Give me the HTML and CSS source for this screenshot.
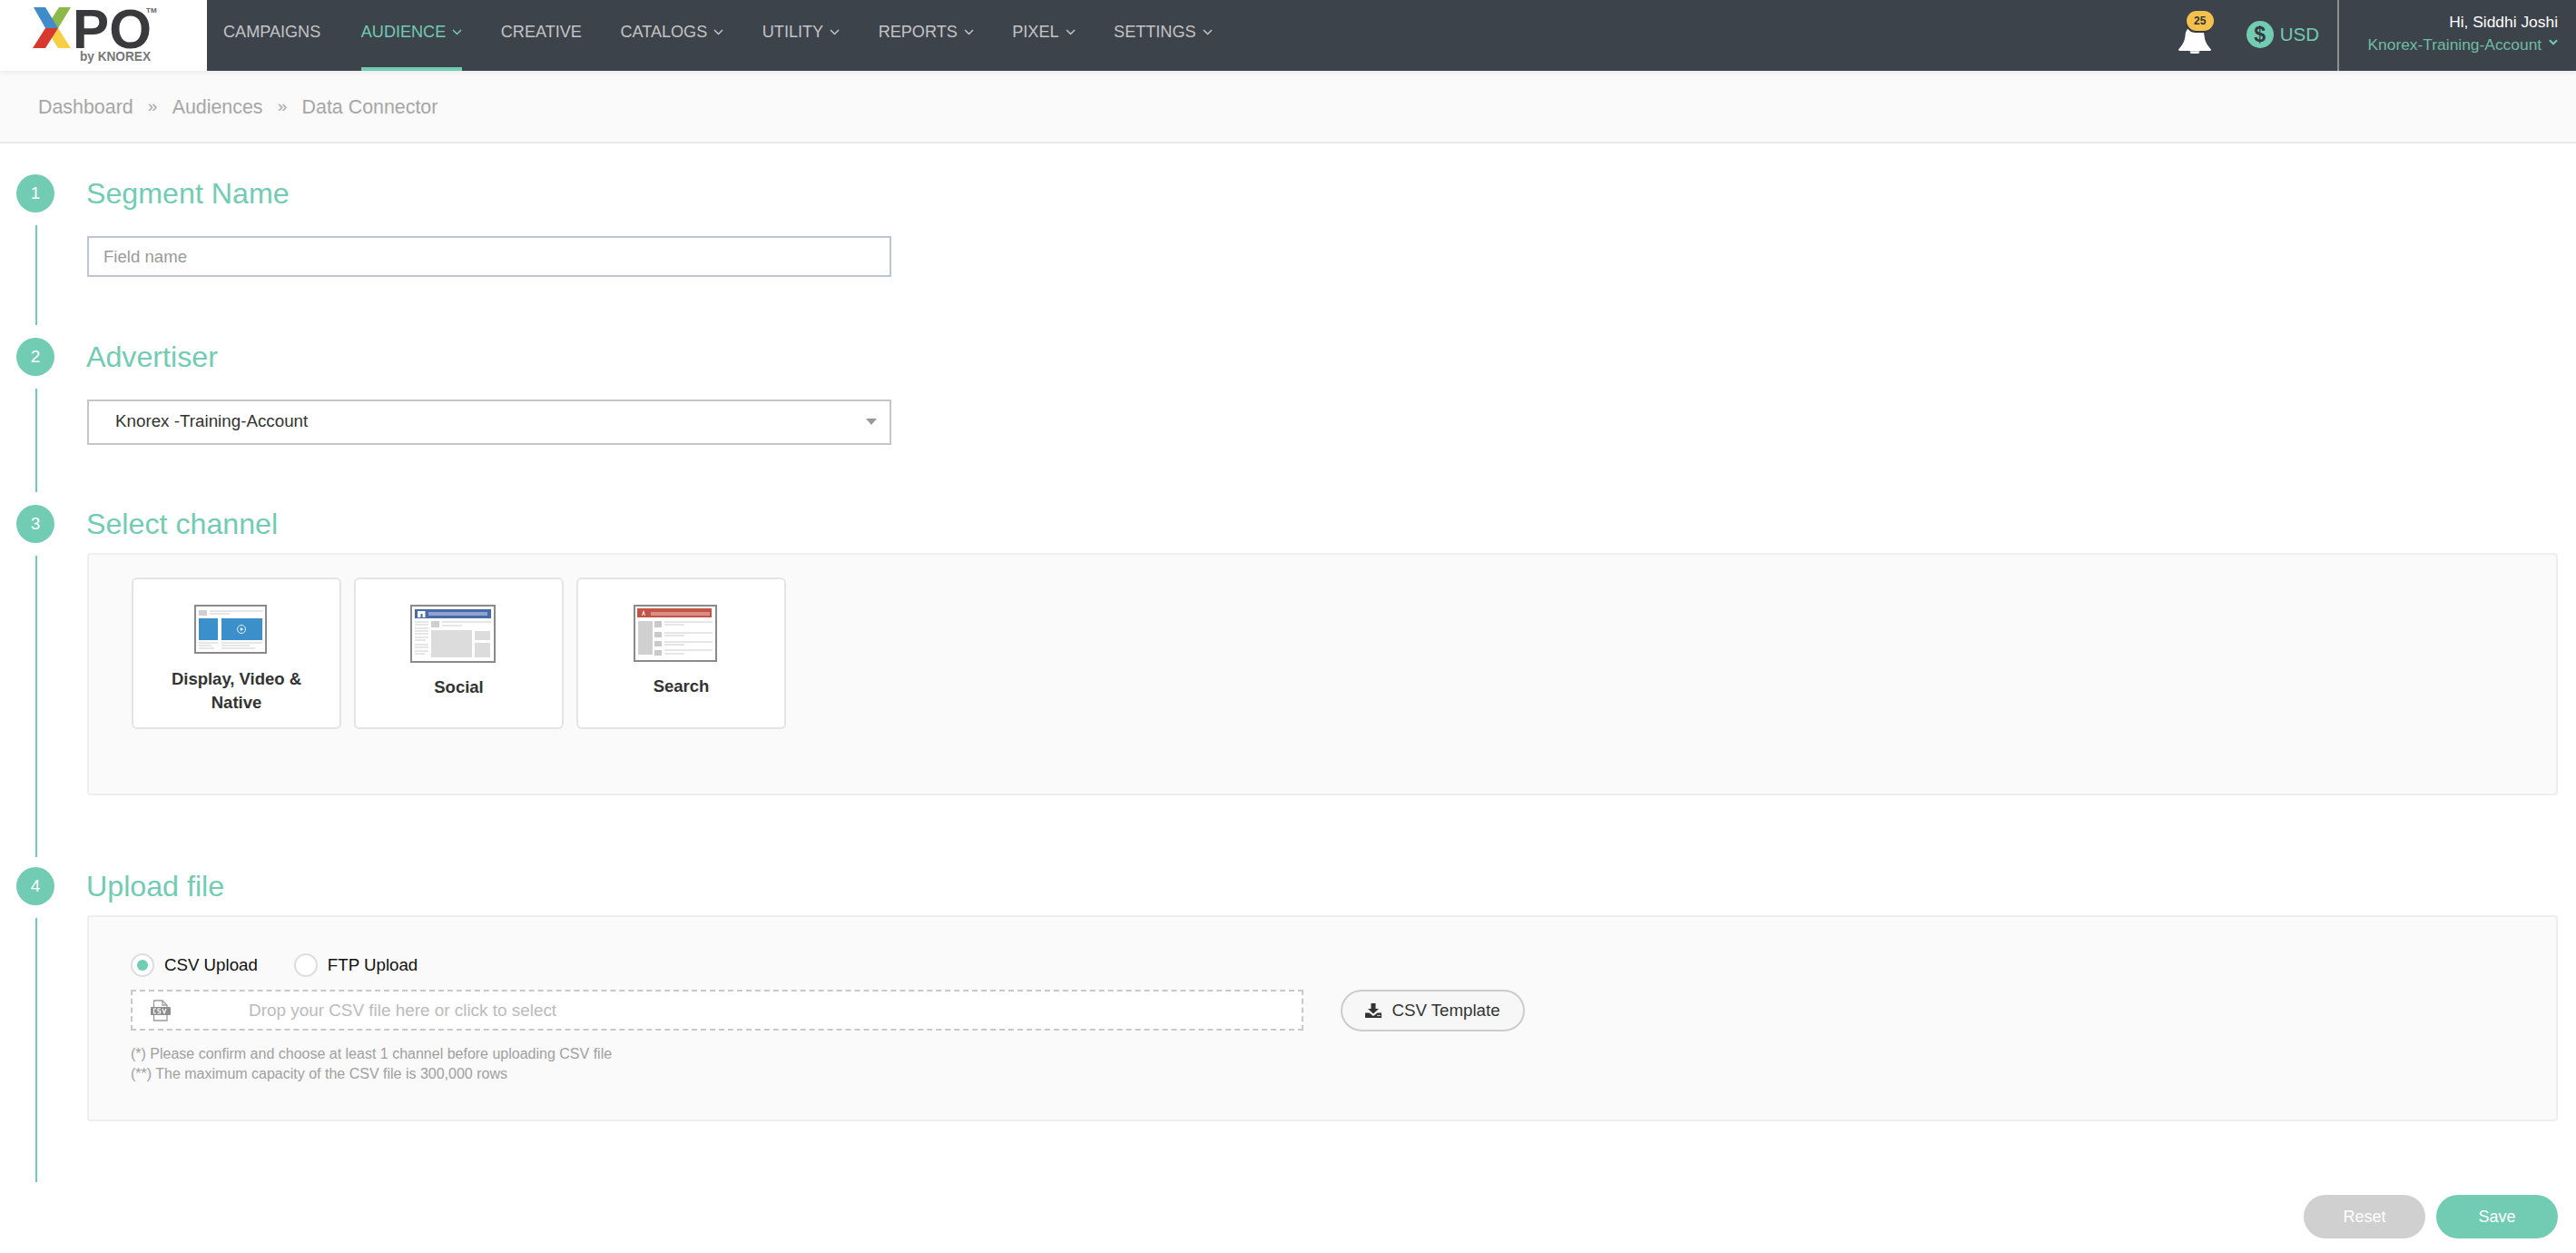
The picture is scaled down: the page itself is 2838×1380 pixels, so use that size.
FILE: index.html
```html
<!DOCTYPE html>
<html lang="en">
<head>
<meta charset="utf-8">
<title>Data Connector</title>
<link rel="stylesheet" href="styles.css">
</head>
<body>
<header class="topbar">
  <a class="logo">
    <svg width="228" height="78" viewBox="0 0 228 78">
      <polygon points="78,8 65,8 50,31 64,31" fill="#8db84a"/>
      <polygon points="37,8 50,8 64,31 50,31" fill="#3f8cc9"/>
      <polygon points="50,31 64,31 78,53 64,53" fill="#f6cf45"/>
      <polygon points="50,31 64,31 50,53 36,53" fill="#d8392f"/>
      <text x="80" y="53" class="logo-po" textLength="87" lengthAdjust="spacingAndGlyphs">PO</text>
      <text x="161" y="14" class="logo-tm">TM</text>
      <text x="88" y="67" class="logo-by" textLength="78" lengthAdjust="spacingAndGlyphs">by KNOREX</text>
    </svg>
  </a>
  <nav class="nav">
    <a class="nav-item">CAMPAIGNS</a>
    <a class="nav-item active">AUDIENCE <svg class="chev" viewBox="0 0 11 7"><polyline points="1,1 5.5,5.5 10,1"/></svg></a>
    <a class="nav-item">CREATIVE</a>
    <a class="nav-item">CATALOGS <svg class="chev" viewBox="0 0 11 7"><polyline points="1,1 5.5,5.5 10,1"/></svg></a>
    <a class="nav-item">UTILITY <svg class="chev" viewBox="0 0 11 7"><polyline points="1,1 5.5,5.5 10,1"/></svg></a>
    <a class="nav-item">REPORTS <svg class="chev" viewBox="0 0 11 7"><polyline points="1,1 5.5,5.5 10,1"/></svg></a>
    <a class="nav-item">PIXEL <svg class="chev" viewBox="0 0 11 7"><polyline points="1,1 5.5,5.5 10,1"/></svg></a>
    <a class="nav-item">SETTINGS <svg class="chev" viewBox="0 0 11 7"><polyline points="1,1 5.5,5.5 10,1"/></svg></a>
  </nav>
  <div class="top-right">
    <div class="bell">
      <svg width="36" height="30" viewBox="0 0 36 30"><path d="M18 0C10 0 8 5 7.500 10C7 16 5 20 0 25.500C0 26.500 1 27 2 27H34C35 27 36 26.500 36 25.500C31 20 29 16 28.500 10C28 5 26 0 18 0Z" fill="#fff"/><path d="M13 27.500A5 4 0 0 0 23 27.500Z" fill="#fff" stroke="#c9cbce" stroke-width="1"/></svg>
      <span class="badge">25</span>
    </div>
    <div class="currency"><span class="coin">$</span><span>USD</span></div>
    <div class="user">
      <div class="user-name">Hi, Siddhi Joshi</div>
      <div class="user-account">Knorex-Training-Account <svg class="chev-bold" viewBox="0 0 11 7"><polyline points="1,1 5.500,5.500 10,1"/></svg></div>
    </div>
  </div>
</header>
<div class="crumbs">
  <a>Dashboard</a><span class="sep">»</span><a>Audiences</a><span class="sep">»</span><a>Data Connector</a>
</div>
<main class="steps">
  <section class="step step-1">
    <div class="marker"><span class="num">1</span><span class="line"></span></div>
    <div class="body">
      <h2 class="title">Segment Name</h2>
      <input class="field" type="text" placeholder="Field name">
    </div>
  </section>
  <section class="step step-2">
    <div class="marker"><span class="num">2</span><span class="line"></span></div>
    <div class="body">
      <h2 class="title">Advertiser</h2>
      <div class="select"><span>Knorex -Training-Account</span><span class="caret"></span></div>
    </div>
  </section>
  <section class="step step-3">
    <div class="marker"><span class="num">3</span><span class="line"></span></div>
    <div class="body">
      <h2 class="title">Select channel</h2>
      <div class="panel panel-channel">
        <div class="card">
          <svg class="thumb" width="80" height="54" viewBox="0 0 80 54">
            <rect x="1" y="1" width="78" height="52" fill="#fff" stroke="#8a8a8a" stroke-width="2"/>
            <rect x="5" y="6" width="9" height="6" fill="#cfcfcf"/>
            <rect x="17" y="6" width="59" height="2" fill="#e6e6e6"/><rect x="17" y="9" width="22" height="2" fill="#e6e6e6"/>
            <rect x="5" y="15" width="21" height="24" fill="#3b8fcb"/><rect x="30" y="15" width="45" height="24" fill="#3b8fcb"/>
            <circle cx="52" cy="27" r="4.500" fill="none" stroke="#e8f2fa"/><polygon points="50.800,25 54.500,27 50.800,29" fill="#e8f2fa"/>
            <rect x="5" y="41" width="21" height="2" fill="#e6e6e6"/><rect x="5" y="44" width="14" height="2" fill="#e6e6e6"/><rect x="5" y="47" width="17" height="2" fill="#e6e6e6"/>
            <rect x="30" y="41" width="45" height="2" fill="#e6e6e6"/><rect x="30" y="44" width="31" height="2" fill="#e6e6e6"/><rect x="30" y="47" width="37" height="2" fill="#e6e6e6"/>
          </svg>
          <span class="card-label label-display">Display, Video &amp; Native</span>
        </div>
        <div class="card">
          <svg class="thumb" width="94" height="64" viewBox="0 0 94 64">
            <rect x="1" y="1" width="92" height="62" fill="#fff" stroke="#8a8a8a" stroke-width="2"/>
            <rect x="5" y="5" width="84" height="10" fill="#4a69a8"/>
            <rect x="8" y="7" width="8.500" height="7" fill="#fff"/><rect x="11.500" y="10" width="2" height="4" fill="#4a69a8"/>
            <rect x="20" y="8" width="65" height="4" fill="#8fa3cc"/>
            <g fill="#e6e6e6">
              <rect x="5" y="18" width="15" height="2"/><rect x="5" y="21" width="15" height="2"/><rect x="5" y="25" width="15" height="2"/><rect x="5" y="28" width="15" height="2"/><rect x="5" y="31" width="15" height="2"/><rect x="5" y="35" width="15" height="2"/><rect x="5" y="38" width="12" height="2"/>
              <rect x="5" y="43" width="15" height="2"/><rect x="5" y="46" width="15" height="2"/><rect x="5" y="50" width="15" height="2"/><rect x="5" y="53" width="11" height="2"/>
              <rect x="35" y="18" width="54" height="2"/><rect x="35" y="22" width="22" height="2"/>
            </g>
            <rect x="23" y="18" width="9" height="7" fill="#cfcfcf"/>
            <rect x="23" y="28" width="45" height="30" fill="#dcdcdc"/>
            <rect x="71" y="29" width="17" height="10" fill="#dcdcdc"/><rect x="71" y="42" width="17" height="16" fill="#dcdcdc"/>
          </svg>
          <span class="card-label label-social">Social</span>
        </div>
        <div class="card">
          <svg class="thumb" width="92" height="63" viewBox="0 0 92 63">
            <rect x="1" y="1" width="90" height="61" fill="#fff" stroke="#8a8a8a" stroke-width="2"/>
            <rect x="4" y="4" width="82" height="10" fill="#c25548"/>
            <polygon points="9,12 11,6 13,12 12,12 11,9 10,12" fill="#fff"/>
            <rect x="19" y="8" width="65" height="4" fill="#d98f85"/>
            <rect x="5" y="18" width="16" height="37" fill="#d0d0d0"/>
            <g fill="#c9c9c9"><rect x="23" y="18" width="8" height="7"/><rect x="23" y="30" width="8" height="6"/><rect x="23" y="40" width="8" height="6"/><rect x="23" y="50" width="8" height="6"/></g>
            <g fill="#e6e6e6"><rect x="34" y="18" width="53" height="2"/><rect x="34" y="21" width="22" height="2"/><rect x="34" y="30" width="53" height="2"/><rect x="34" y="33" width="22" height="2"/><rect x="34" y="40" width="53" height="2"/><rect x="34" y="43" width="22" height="2"/><rect x="34" y="49" width="53" height="2"/><rect x="34" y="53" width="22" height="2"/></g>
          </svg>
          <span class="card-label label-search">Search</span>
        </div>
      </div>
    </div>
  </section>
  <section class="step step-4">
    <div class="marker"><span class="num">4</span><span class="line"></span></div>
    <div class="body">
      <h2 class="title">Upload file</h2>
      <div class="panel panel-upload">
        <div class="radios">
          <label class="radio"><span class="dot on"></span>CSV Upload</label>
          <label class="radio"><span class="dot"></span>FTP Upload</label>
        </div>
        <div class="upload-row">
          <div class="drop">
            <svg class="csv-icon" width="22" height="24" viewBox="0 0 22 24">
              <path d="M3.500 8V1H13L18 6V23H3.500V17" fill="none" stroke="#9a9a9a" stroke-width="1.300"/>
              <path d="M13 1V6H18" fill="none" stroke="#9a9a9a" stroke-width="1.300"/>
              <rect x="0" y="8" width="22" height="9" rx="1" fill="#8d8d8d"/>
              <path d="M6 10H3.500V15H6M11 10H8V12.500H10.500V15H7.500M13 10L15 15L17 10" fill="none" stroke="#fff" stroke-width="1.200"/>
            </svg>
            <span class="drop-text">Drop your CSV file here or click to select</span>
          </div>
          <button class="template" type="button">
            <svg width="18" height="16" viewBox="0 0 18 16"><path d="M6.500 0H11.500V6H15L9 11.500L3 6H6.500Z" fill="#333"/><path d="M0 10.500H4.500L9 14L13.500 10.500H18V16H0Z" fill="#333"/><circle cx="14" cy="13.500" r=".8" fill="#f7f7f7"/><circle cx="16" cy="13.500" r=".8" fill="#f7f7f7"/></svg>
            CSV Template
          </button>
        </div>
        <p class="notes">(*) Please confirm and choose at least 1 channel before uploading CSV file<br>(**) The maximum capacity of the CSV file is 300,000 rows</p>
      </div>
    </div>
  </section>
</main>
<footer class="actions">
  <button class="pill pill-reset" type="button">Reset</button>
  <button class="pill pill-save" type="button">Save</button>
</footer>
</body>
</html>
```
FILE: styles.css
```css
* { box-sizing: border-box; }
html, body { margin: 0; padding: 0; }
body { width: 2838px; height: 1380px; overflow: hidden; background: #fff; font-family: "Liberation Sans", Arial, sans-serif; color: #333; }

.topbar { display: flex; height: 78px; background: #3d434b; position: relative; z-index: 2; box-shadow: 0 2px 6px rgba(0,0,0,.07); }
.logo { display: block; width: 228px; height: 78px; background: #fff; flex: none; }
.logo svg { display: block; }
.logo-po { font-family: "Liberation Sans", sans-serif; font-weight: 700; font-size: 62px; fill: #3a3a3c; }
.logo-tm { font-size: 8px; font-weight: 700; fill: #666; }
.logo-by { font-size: 15px; font-weight: 700; fill: #77777a; }

.nav { display: flex; gap: 42.500px; padding-left: 18px; }
.nav-item { display: flex; align-items: center; gap: 7px; height: 78px; padding-bottom: 8px; font-size: 18.100px; color: #c3c4c6; }
.nav-item:first-child { margin-right: 2px; }
.nav-item.active { color: #72cbb3; box-shadow: inset 0 -4px 0 #72cbb3; }
.chev { width: 11px; height: 7px; fill: none; stroke: currentColor; stroke-width: 1.500; }

.top-right { margin-left: auto; display: flex; align-items: stretch; }
.bell { position: relative; width: 40px; margin-right: 35px; padding-top: 29px; }
.bell svg { display: block; }
.badge { position: absolute; left: 9px; top: 12px; width: 30px; height: 22px; border-radius: 11px; background: #f4c04e; box-shadow: -1px 2px 0 #33383f; color: #333; font-size: 12px; font-weight: 700; text-align: center; line-height: 22px; }
.currency { display: flex; align-items: center; gap: 7px; padding-bottom: 2px; font-size: 20.500px; color: #72cbb3; margin-right: 20px; }
.coin { width: 30px; height: 30px; border-radius: 50%; background: #72cbb3; color: #33383f; font-size: 23px; font-weight: 700; text-align: center; line-height: 30px; }
.user { width: 263px; border-left: 2px solid #8b8e92; padding: 14px 20px 0 0; text-align: right; }
.user-name { font-size: 17.400px; line-height: 21px; color: #fff; }
.user-account { font-size: 17.400px; line-height: 21px; margin-top: 4px; color: #6fbba6; }
.chev-bold { width: 10px; height: 7px; margin-left: 3px; vertical-align: 5px; fill: none; stroke: #72cbb3; stroke-width: 2.200; }

.crumbs { display: flex; align-items: center; height: 80px; padding: 2px 0 0 42px; background: #fafafa; border-bottom: 2px solid #e9eaec; font-size: 21.400px; color: #a6a6a6; }
.sep { width: 43px; text-align: center; font-size: 19px; padding-bottom: 3px; }

.steps { padding-top: 34px; }
.step { display: flex; padding-right: 20px; }
.step-1 { height: 180px; }
.step-2 { height: 184px; }
.step-3 { height: 399px; }
.step-4 { height: 361px; }
.marker { flex: none; width: 96px; padding-left: 18px; display: flex; flex-direction: column; }
.num { width: 42px; height: 42px; border-radius: 50%; background: #72cbb3; color: #fff; font-size: 19px; line-height: 42px; text-align: center; flex: none; }
.line { width: 2px; flex: 1; margin: 14px 0 14px 21px; background: #72cbb3; }
.step-3 .line { margin-bottom: 11px; }
.body { flex: 1; min-width: 0; }
.title { margin: 0 0 0 -1px; height: 42px; font-size: 32.200px; font-weight: 400; line-height: 42px; color: #72cbb3; }

.field { display: block; margin-top: 26px; width: 886px; height: 45px; padding: 0 16px; border: 2px solid #bfc4d2; background: #fff; outline: 0; font: 18.600px "Liberation Sans", Arial, sans-serif; }
.field::placeholder { color: #9a9a9a; opacity: 1; }

.select { display: flex; align-items: center; justify-content: space-between; margin-top: 26px; width: 886px; height: 50px; padding: 0 14px 2px 29px; border: 2px solid #c6c6c6; font-size: 18.800px; color: #333; background: #fff; }
.caret { width: 0; height: 0; border-left: 6px solid transparent; border-right: 6px solid transparent; border-top: 7px solid #999; }

.panel { background: #fafafa; border: 2px solid #eee; border-radius: 4px; }
.panel-channel { display: flex; gap: 14px; align-items: flex-start; margin-top: 11px; height: 267px; padding: 25px 0 0 47px; }
.card { width: 231px; height: 167px; padding-top: 28px; background: #fff; border: 2px solid #e4e4e4; border-radius: 6px; display: flex; flex-direction: column; align-items: center; text-align: center; }
.thumb { display: block; flex: none; margin-right: 14px; }
.card-label { font-size: 18.500px; font-weight: 700; line-height: 26px; color: #333; }
.label-display { width: 190px; margin-top: 15px; }
.label-social { margin-top: 14px; }
.label-search { margin-top: 14px; }

.panel-upload { margin-top: 11px; height: 227px; padding: 40px 0 0 46px; }
.radios { display: flex; gap: 40px; height: 26px; }
.radio { display: flex; align-items: center; gap: 11px; font-size: 18.700px; color: #111; }
.dot { position: relative; display: block; width: 26px; height: 26px; border-radius: 50%; background: #fff; border: 2px solid #ddd; }
.dot.on::after { content: ""; position: absolute; left: 5px; top: 5px; width: 12px; height: 12px; border-radius: 50%; background: #72cbb3; }
.upload-row { display: flex; gap: 41px; margin-top: 14px; }
.drop { display: flex; align-items: center; width: 1292px; height: 45px; padding: 1px 0 0 20px; background: #fff; border: 2px dashed #c8c8c8; }
.csv-icon { flex: none; }
.drop-text { margin-left: 86px; font-size: 18.900px; color: #bbb; }
.template { display: flex; align-items: center; justify-content: center; gap: 11px; width: 203px; height: 46px; padding: 0; border: 2px solid #ccc; border-radius: 23px; background: #f7f7f7; font: 18.700px "Liberation Sans", Arial, sans-serif; color: #333; }
.notes { margin: 14px 0 0; font-size: 16px; line-height: 22px; color: #a0a0a0; }

.actions { display: flex; justify-content: flex-end; gap: 12px; padding-right: 20px; }
.pill { width: 134px; height: 48px; border: 0; border-radius: 24px; color: #fff; font: 18px "Liberation Sans", Arial, sans-serif; }
.pill-reset { background: #d0d0d0; }
.pill-save { background: #72cbb3; }
```
